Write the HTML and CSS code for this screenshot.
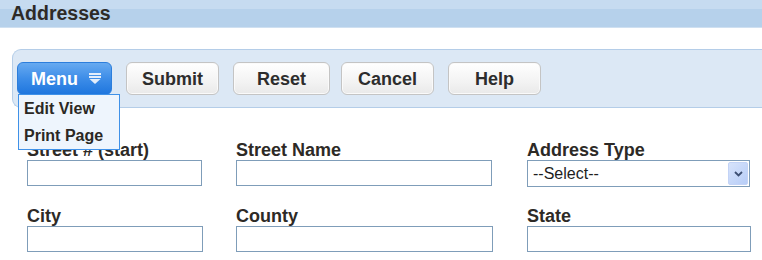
FILE: index.html
```html
<html>
<head>
	<title>Addresses</title>
	<link rel="stylesheet" href="styles.css">
</head>
<body>
<div class="header">Addresses</div>

<div class="toolbar">
	<div class="menuwrap">
		<button class="btn menu" type="button">Menu
			<svg class="menuicon" width="12" height="11" viewBox="0 0 12 11">
				<rect x="0" y="0" width="12" height="2"/>
				<rect x="0" y="3" width="12" height="2"/>
				<polygon points="0.5,6 11.5,6 6,11"/>
			</svg>
		</button>
		<ul class="dropdown">
			<li>Edit View</li>
			<li>Print Page</li>
		</ul>
	</div>
	<button class="btn submit" type="button">Submit</button>
	<button class="btn reset" type="button">Reset</button>
	<button class="btn cancel" type="button">Cancel</button>
	<button class="btn help" type="button">Help</button>
</div>

<form class="fields">
	<div class="field">
		<label>Street # (start)</label>
		<input type="text" class="txt w1">
	</div>
	<div class="field">
		<label>Street Name</label>
		<input type="text" class="txt w2">
	</div>
	<div class="field">
		<label>Address Type</label>
		<div class="selectwrap">
			<select class="sel"><option>--Select--</option></select>
			<span class="selarrow">
				<svg width="9" height="6" viewBox="0 0 9 6"><polyline points="1,1 4.5,4.5 8,1" fill="none" stroke="#3d4f73" stroke-width="1.8"/></svg>
			</span>
		</div>
	</div>
	<div class="field">
		<label>City</label>
		<input type="text" class="txt w1b">
	</div>
	<div class="field">
		<label>County</label>
		<input type="text" class="txt w2b">
	</div>
	<div class="field">
		<label>State</label>
		<input type="text" class="txt w3">
	</div>
</form>
</body>
</html>
```

FILE: styles.css
```css
body {
	margin:0;
	background:#fff;
	font-family:"Liberation Sans", Arial, sans-serif;
	color:#2e2e2e;
	overflow:hidden;
}
.header {
	height:28px;
	line-height:26px;
	padding-left:11px;
	font-size:19.5px;
	font-weight:bold;
	color:#2d2a26;
	background:linear-gradient(#c6dbf0 0, #c6dbf0 9px, #b6d1eb 9px, #b6d1eb 27px, #cfe0f1 27px);
}
.toolbar {
	margin:21px 0 0 12px;
	height:33px;
	padding:12px 0 12px 4px;
	background:#dce8f5;
	border:1px solid #b4cde8;
	border-right:none;
	border-radius:9px 0 0 9px;
	display:flex;
	gap:14px;
}
.menuwrap {
	position:relative;
}
.btn {
	height:33px;
	width:93px;
	padding:2px 0 0 0;
	font-family:"Liberation Sans", Arial, sans-serif;
	font-size:18px;
	font-weight:bold;
	color:#2d2d2d;
	border:1px solid #c4c4c4;
	border-radius:6px;
	background:linear-gradient(#ffffff, #f3f3f3 60%, #e9e9e9);
	box-shadow:inset 0 0 0 1px #fafafa;
}
.menu {
	width:95px;
	color:#fff;
	border-color:#2c7edc;
	background:linear-gradient(#67aaf0, #3d8de8 50%, #1f76de);
	box-shadow:none;
	text-align:left;
	padding-left:13px;
}
.menuicon {
	fill:#e4eefb;
	margin-left:6px;
	vertical-align:1px;
}
.reset {
	width:97px;
	margin-right:-3px;
}
.dropdown {
	position:absolute;
	left:1px;
	top:32px;
	width:100px;
	height:54px;
	margin:0;
	padding:0;
	list-style:none;
	background:#eef5fd;
	border:1px solid #3f91e8;
	z-index:2;
}
.dropdown li {
	line-height:27px;
	padding-left:5px;
	font-size:16px;
	font-weight:bold;
	color:#2b2824;
}
.fields {
	margin:32px 0 0 27px;
	display:grid;
	grid-template-columns:209px 291px 224px;
	row-gap:19px;
}
.field label {
	display:block;
	height:20px;
	line-height:20px;
	font-size:18px;
	font-weight:bold;
	color:#2d2a26;
}
.txt {
	display:block;
	height:26px;
	margin:0;
	padding:0 4px;
	border:1px solid #7f9db9;
	background:#fff;
	box-sizing:border-box;
}
.w1 { width:175px; }
.w1b { width:176px; }
.w2 { width:256px; }
.w2b { width:257px; }
.w3 { width:224px; }
.selectwrap {
	position:relative;
	width:223px;
	height:27px;
}
.sel {
	-webkit-appearance:none;
	appearance:none;
	display:block;
	width:223px;
	height:27px;
	margin:0;
	padding:0 0 0 5px;
	border:1px solid #7f9db9;
	border-radius:0;
	background:#fff;
	font-family:"Liberation Sans", Arial, sans-serif;
	font-size:16px;
	color:#1e1e1e;
	outline:none;
}
.selarrow {
	position:absolute;
	right:2px;
	top:2px;
	width:20px;
	height:23px;
	box-sizing:border-box;
	border:1px solid #c3d3f6;
	border-radius:2px;
	background:linear-gradient(135deg, #d7e3fb, #b7cdf7);
	display:flex;
	align-items:center;
	justify-content:center;
}
```
